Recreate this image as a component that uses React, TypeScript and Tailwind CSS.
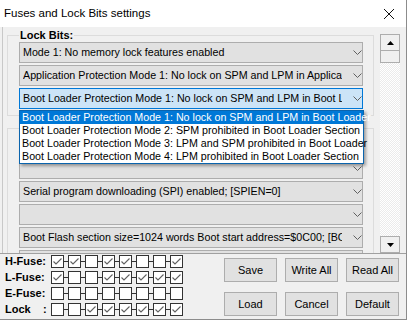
import type { ReactNode } from "react";

const font = "font-['Liberation_Sans',Arial,sans-serif]";

function Chevron() {
  return (
    <svg width="9" height="5" viewBox="0 0 9 5" className="shrink-0">
      <path d="M0.5 0.5 L4.5 4.5 L8.5 0.5" fill="none" stroke="#606060" strokeWidth="1" />
    </svg>
  );
}

function Combo({ text, focused }: { text?: string; focused?: boolean }) {
  return (
    <div
      className={`flex h-[21px] w-[344px] items-center border pl-[3px] ${
        focused ? "border-[#0078d7] bg-[#cce4f7]" : "border-[#adadad] bg-[#e1e1e1]"
      }`}
    >
      <span className="w-[322px] overflow-hidden whitespace-nowrap text-[10.7px] leading-[19px] text-black">
        {text}
      </span>
      <span className="ml-[11px]">
        <Chevron />
      </span>
    </div>
  );
}

function Group({ label, children }: { label?: string; children: ReactNode }) {
  return (
    <fieldset className="w-[367px] border border-[#dcdcdc] pb-[6px] pl-[11px]">
      <legend className="h-[14px] min-w-[50px] px-[1px] text-[11px] font-bold leading-[14px] text-black">
        {label}
      </legend>
      <div className="flex flex-col gap-[2px]">{children}</div>
    </fieldset>
  );
}

function Check({ on }: { on: boolean }) {
  return (
    <div className="flex h-[13px] w-[13px] items-center justify-center border border-[#333] bg-white">
      {on && (
        <svg width="11" height="11" viewBox="0 0 11 11">
          <path d="M1.5 5.5 L4 8 L9.5 2.5" fill="none" stroke="#606060" strokeWidth="1.1" />
        </svg>
      )}
    </div>
  );
}

function FuseRow({ label, bits }: { label: string; bits: number[] }) {
  return (
    <div className="flex h-[13px] items-center">
      <span className="w-[46px] whitespace-pre text-[11px] font-bold leading-[13px] text-black">{label}</span>
      {bits.map((b, i) => (
        <div key={i} className="flex items-center">
          {i > 0 && <div className="h-px w-[4px] bg-[#333]" />}
          <Check on={b === 1} />
        </div>
      ))}
    </div>
  );
}

function Btn({ children }: { children: ReactNode }) {
  return (
    <button className="flex h-[24px] w-[53px] items-center justify-center border border-[#adadad] bg-[#e1e1e1] text-[11px] text-black">
      {children}
    </button>
  );
}

const items = [
  "Boot Loader Protection Mode 1: No lock on SPM and LPM in Boot Loader",
  "Boot Loader Protection Mode 2: SPM prohibited in Boot Loader Section",
  "Boot Loader Protection Mode 3: LPM and SPM prohibited in Boot Loader",
  "Boot Loader Protection Mode 4: LPM prohibited in Boot Loader Section",
];

export default function App() {
  return (
    <div className={`relative h-[320px] w-[407px] overflow-hidden border-b border-r border-[#8c8c8c] bg-[#f0f0f0] ${font}`}>
      {/* title bar */}
      <div className="flex h-[27px] items-center justify-between bg-white pl-[4px] pr-[11px]">
        <span className="text-[11.5px] text-black">Fuses and Lock Bits settings</span>
        <svg width="12" height="12" viewBox="0 0 12 12">
          <path d="M1 1 L11 11 M11 1 L1 11" stroke="#111" strokeWidth="1" />
        </svg>
      </div>

      {/* scroll area */}
      <div className="flex h-[227px] border-b border-[#a0a0a0]">
        <div className="ml-[2px] w-[378px] overflow-hidden border-l border-[#c8c8c8] pl-[4px] pt-[1px]">
          <Group label="Lock Bits:">
            <Combo text="Mode 1: No memory lock features enabled" />
            <Combo text="Application Protection Mode 1: No lock on SPM and LPM in Application Section" />
            <Combo text="Boot Loader Protection Mode 1: No lock on SPM and LPM in Boot Loader Section" focused />
          </Group>
          <div className="mt-[5px]">
            <Group>
              <Combo text="" />
              <Combo text="" />
              <Combo text="Serial program downloading (SPI) enabled; [SPIEN=0]" />
              <Combo text="" />
              <Combo text="Boot Flash section size=1024 words Boot start address=$0C00; [BOOTSZ=00]" />
              <Combo text="" />
            </Group>
          </div>
        </div>

        {/* scrollbar */}
        <div className="flex w-[20px] flex-col pt-[7px]">
          <div className="flex h-[17px] items-center justify-center border border-[#adadad] bg-[#f0f0f0]">
            <svg width="7" height="4" viewBox="0 0 7 4">
              <path d="M0 4 L3.5 0 L7 4 Z" fill="#000" />
            </svg>
          </div>
          <div className="-mt-px h-[13px] border border-[#adadad] bg-[#f0f0f0]" />
          <div className="flex-1 bg-[repeating-conic-gradient(#ffffff_0_25%,#ebebeb_0_50%)] bg-[length:2px_2px]" />
          <div className="flex h-[17px] items-center justify-center border border-[#adadad] bg-[#f0f0f0]">
            <svg width="7" height="4" viewBox="0 0 7 4">
              <path d="M0 0 L3.5 4 L7 0 Z" fill="#000" />
            </svg>
          </div>
        </div>
      </div>

      {/* bottom */}
      <div className="flex">
        <div className="flex flex-col gap-[3px] pl-[5px] pt-[1px]">
          <FuseRow label="H-Fuse:" bits={[1, 1, 0, 1, 1, 0, 0, 1]} />
          <FuseRow label="L-Fuse:" bits={[1, 0, 0, 1, 1, 1, 1, 1]} />
          <FuseRow label="E-Fuse:" bits={[0, 0, 0, 0, 0, 0, 0, 0]} />
          <FuseRow label={"Lock    :"} bits={[0, 0, 1, 1, 1, 1, 1, 1]} />
        </div>
        <div className="ml-auto mr-[7px] flex flex-col gap-[10px] pt-[4px]">
          <div className="flex gap-[8px]">
            <Btn>Save</Btn>
            <Btn>Write All</Btn>
            <Btn>Read All</Btn>
          </div>
          <div className="flex gap-[8px]">
            <Btn>Load</Btn>
            <Btn>Cancel</Btn>
            <Btn>Default</Btn>
          </div>
        </div>
      </div>

      {/* open dropdown list */}
      <div className="absolute left-[19px] top-[110px] w-[345px] border border-[#0a64ad] bg-white shadow-[2px_2px_3px_rgba(0,0,0,0.35)]">
        {items.map((t, i) => (
          <div
            key={t}
            className={`h-[13px] whitespace-nowrap pl-[2px] text-[10.7px] leading-[13px] ${
              i === 0 ? "bg-[#0078d7] text-white" : "text-black"
            }`}
          >
            {t}
          </div>
        ))}
      </div>
    </div>
  );
}
